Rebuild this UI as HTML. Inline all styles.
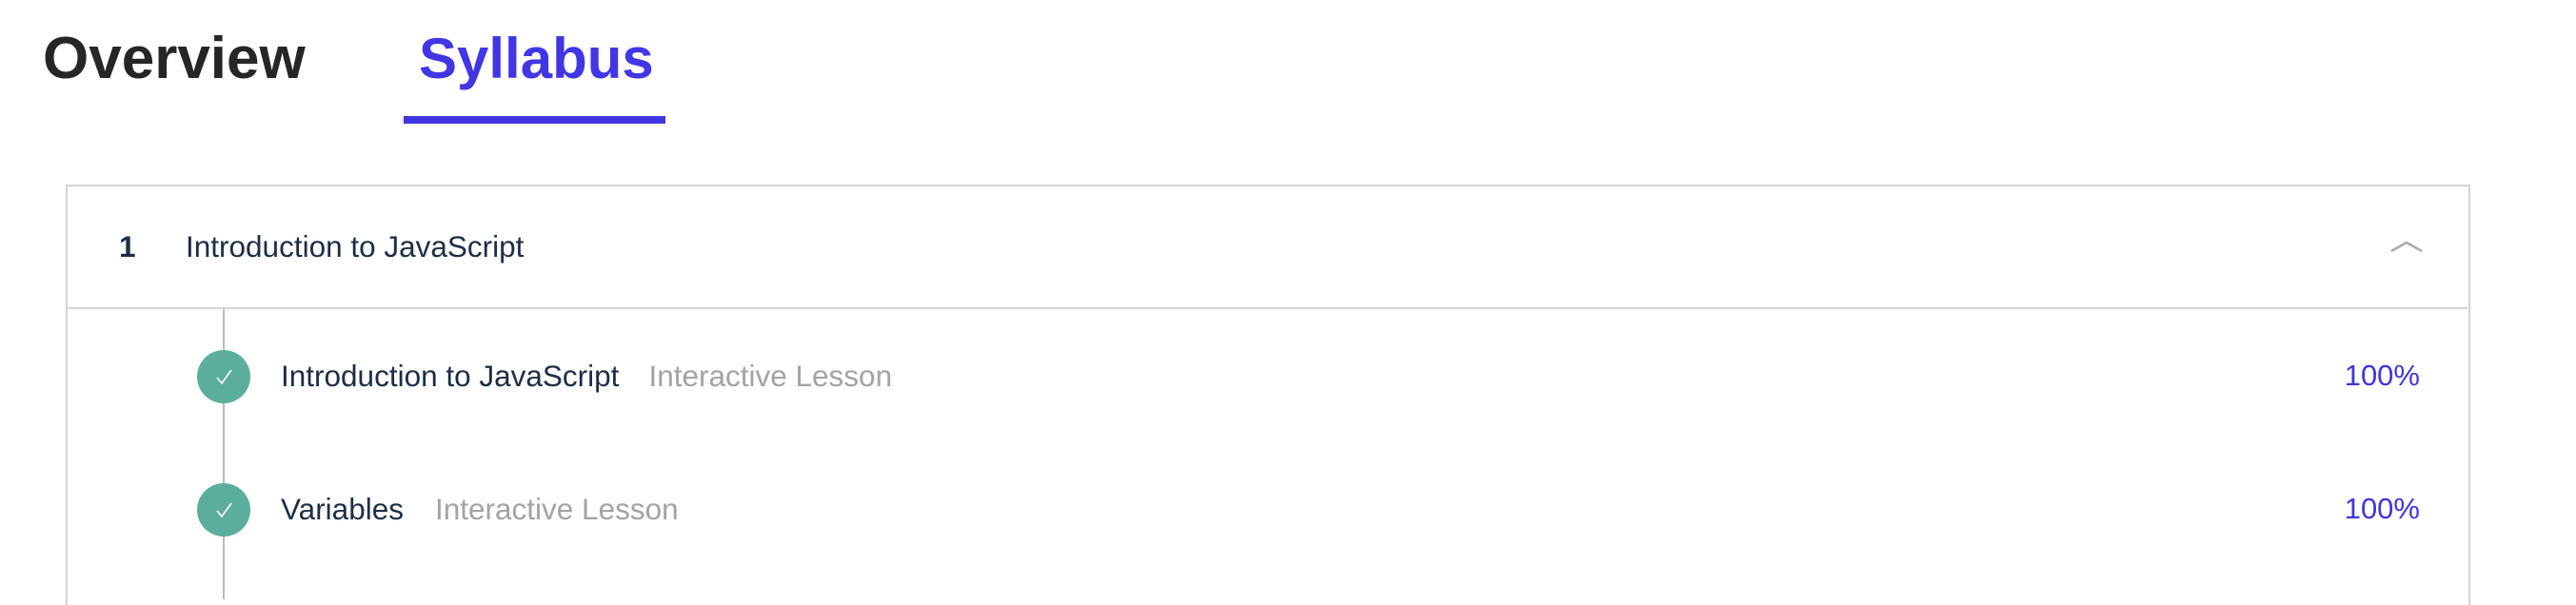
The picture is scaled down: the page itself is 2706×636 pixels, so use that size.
<!DOCTYPE html>
<html><head><style>
body{margin:0;width:2706px;height:630px;background:#fff;overflow:hidden;position:relative;font-family:"Liberation Sans",sans-serif}
.a{position:absolute;white-space:nowrap}
.t{font-size:62px;font-weight:bold;top:26px;line-height:72px}
.s{font-size:31.5px;line-height:34px;color:#1c2e45}
.g{color:#a3a3a6}
.p{color:#3f35e0;font-size:31px;line-height:34px}
.c{position:absolute;width:56px;height:56px;border-radius:50%;background:#5bae9c;left:207px}
</style></head><body>
<div class="a t" style="left:45px;color:#262626">Overview</div>
<div class="a t" style="left:440px;color:#4236e4;font-size:60px">Syllabus</div>
<div class="a" style="left:424px;top:122px;width:275px;height:8px;background:#4236e4"></div>
<div class="a" style="left:69px;top:194px;width:2522px;height:440px;border:2px solid #d3d3d3;border-bottom:none"></div>
<div class="a" style="left:70px;top:323px;width:2522px;height:2px;background:#d3d3d3"></div>
<div class="a s" style="left:125px;top:242px;font-weight:bold">1</div>
<div class="a s" style="left:195px;top:242px">Introduction to JavaScript</div>
<svg class="a" style="left:2508px;top:248px" width="40" height="22"><path d="M4 16 L20 7 L36 16" stroke="#aaa" stroke-width="2.5" fill="none"/></svg>
<div class="a" style="left:234px;top:325px;width:2px;height:305px;background:#bbb"></div>
<div class="c" style="top:368px"></div>
<div class="c" style="top:508px"></div>
<svg class="a" style="left:207px;top:368px" width="56" height="56"><path d="M21 29 L26 35 L36 21" stroke="#fff" stroke-width="1.6" fill="none"/></svg>
<svg class="a" style="left:207px;top:508px" width="56" height="56"><path d="M21 29 L26 35 L36 21" stroke="#fff" stroke-width="1.6" fill="none"/></svg>
<div class="a s" style="left:295px;top:378px">Introduction to JavaScript<span class="g" style="margin-left:31px">Interactive Lesson</span></div>
<div class="a s" style="left:295px;top:518px">Variables<span class="g" style="margin-left:33px">Interactive Lesson</span></div>
<div class="a p" style="right:164px;top:378px">100%</div>
<div class="a p" style="right:164px;top:518px">100%</div>
</body></html>
